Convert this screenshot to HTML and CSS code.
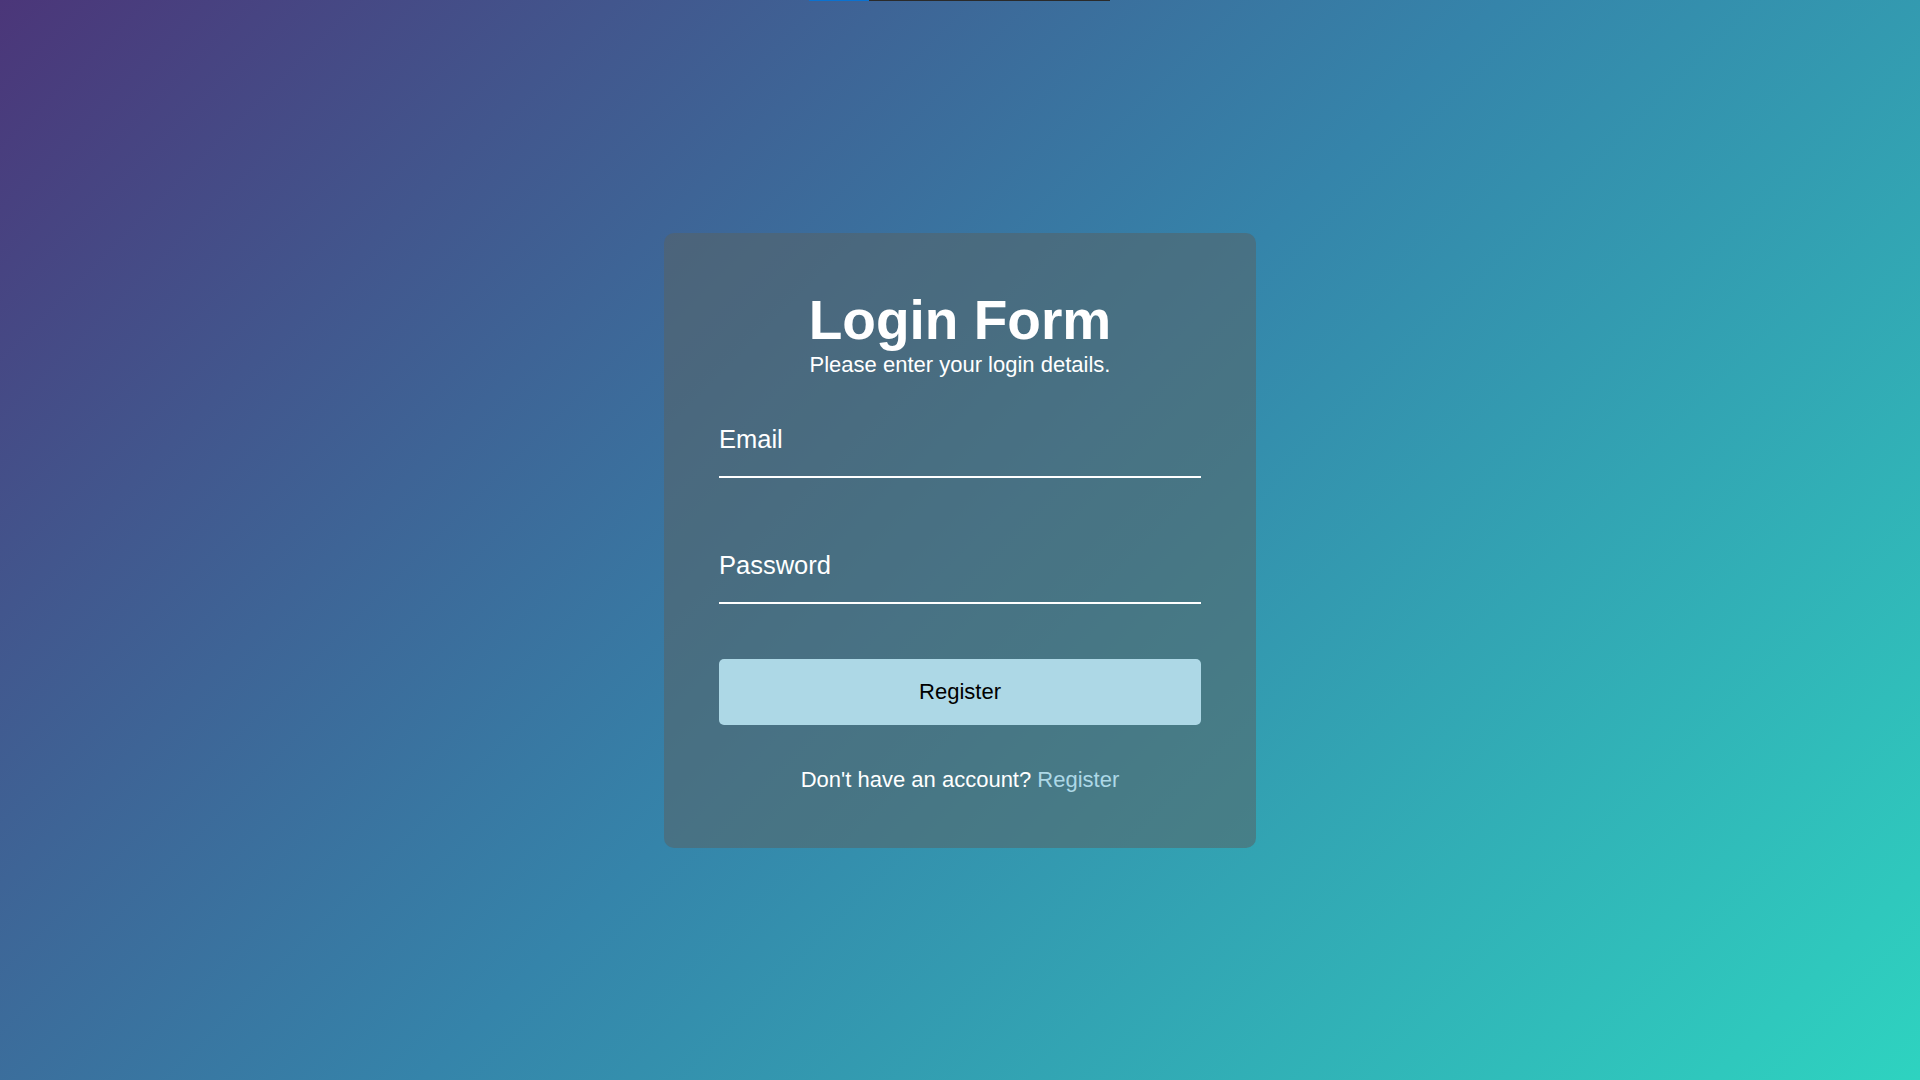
FILE: index.html
```html
<!DOCTYPE html>
<html lang="en">
<head>
<meta charset="utf-8">
<title>Login Form</title>
<link rel="stylesheet" href="styles.css">
</head>
<body class="page">
  <div class="topbar"><span class="topbar-fill"></span></div>
  <main class="stage">
    <form class="card" onsubmit="return false;">
      <h1 class="title">Login Form</h1>
      <p class="subtitle">Please enter your login details.</p>
      <input class="field field-email" type="email" placeholder="Email">
      <input class="field field-password" type="password" placeholder="Password">
      <button class="submit" type="submit">Register</button>
      <p class="footer-text">Don't have an account? <a class="footer-link" href="#">Register</a></p>
    </form>
  </main>
</body>
</html>
```

FILE: styles.css
```css
html, body {
  margin: 0;
  padding: 0;
}

.page {
  font-family: "Liberation Sans", Arial, sans-serif;
  color: #ffffff;
  min-height: 100vh;
  background: linear-gradient(135deg, #4b3679 0%, #3584aa 50%, #2ed3c0 100%);
  position: relative;
}

.topbar {
  position: absolute;
  top: 0;
  left: 809px;
  width: 301px;
  height: 1px;
  background: #2a2a2a;
}

.topbar-fill {
  display: block;
  width: 60px;
  height: 100%;
  background: #0b72d0;
}

.stage {
  min-height: 100vh;
  display: flex;
  align-items: center;
  justify-content: center;
}

.card {
  width: 482px;
  padding: 55px;
  border-radius: 10px;
  background: rgba(88, 98, 100, 0.55);
  display: flex;
  flex-direction: column;
  text-align: center;
}

.title {
  margin: 0;
  font-size: 55px;
  font-weight: bold;
  line-height: normal;
}

.subtitle {
  margin: 0;
  font-size: 22px;
  line-height: normal;
}

.field {
  box-sizing: border-box;
  width: 100%;
  height: 53px;
  margin: 47px 0 0;
  padding: 0 0 21px;
  border: none;
  border-bottom: 2px solid #ffffff;
  background: transparent;
  color: #ffffff;
  font-family: inherit;
  font-size: 25.5px;
  line-height: 30px;
  outline: none;
}

.field-password {
  margin-top: 73px;
}

.field::placeholder {
  color: #ffffff;
  opacity: 1;
}

.submit {
  margin-top: 55px;
  height: 66px;
  width: 100%;
  border: none;
  border-radius: 5px;
  background: #add8e6;
  color: #000000;
  font-family: inherit;
  font-size: 22px;
  cursor: pointer;
}

.footer-text {
  margin: 42px 0 0;
  font-size: 22px;
  line-height: normal;
}

.footer-link {
  color: #add8e6;
  text-decoration: none;
}
```
